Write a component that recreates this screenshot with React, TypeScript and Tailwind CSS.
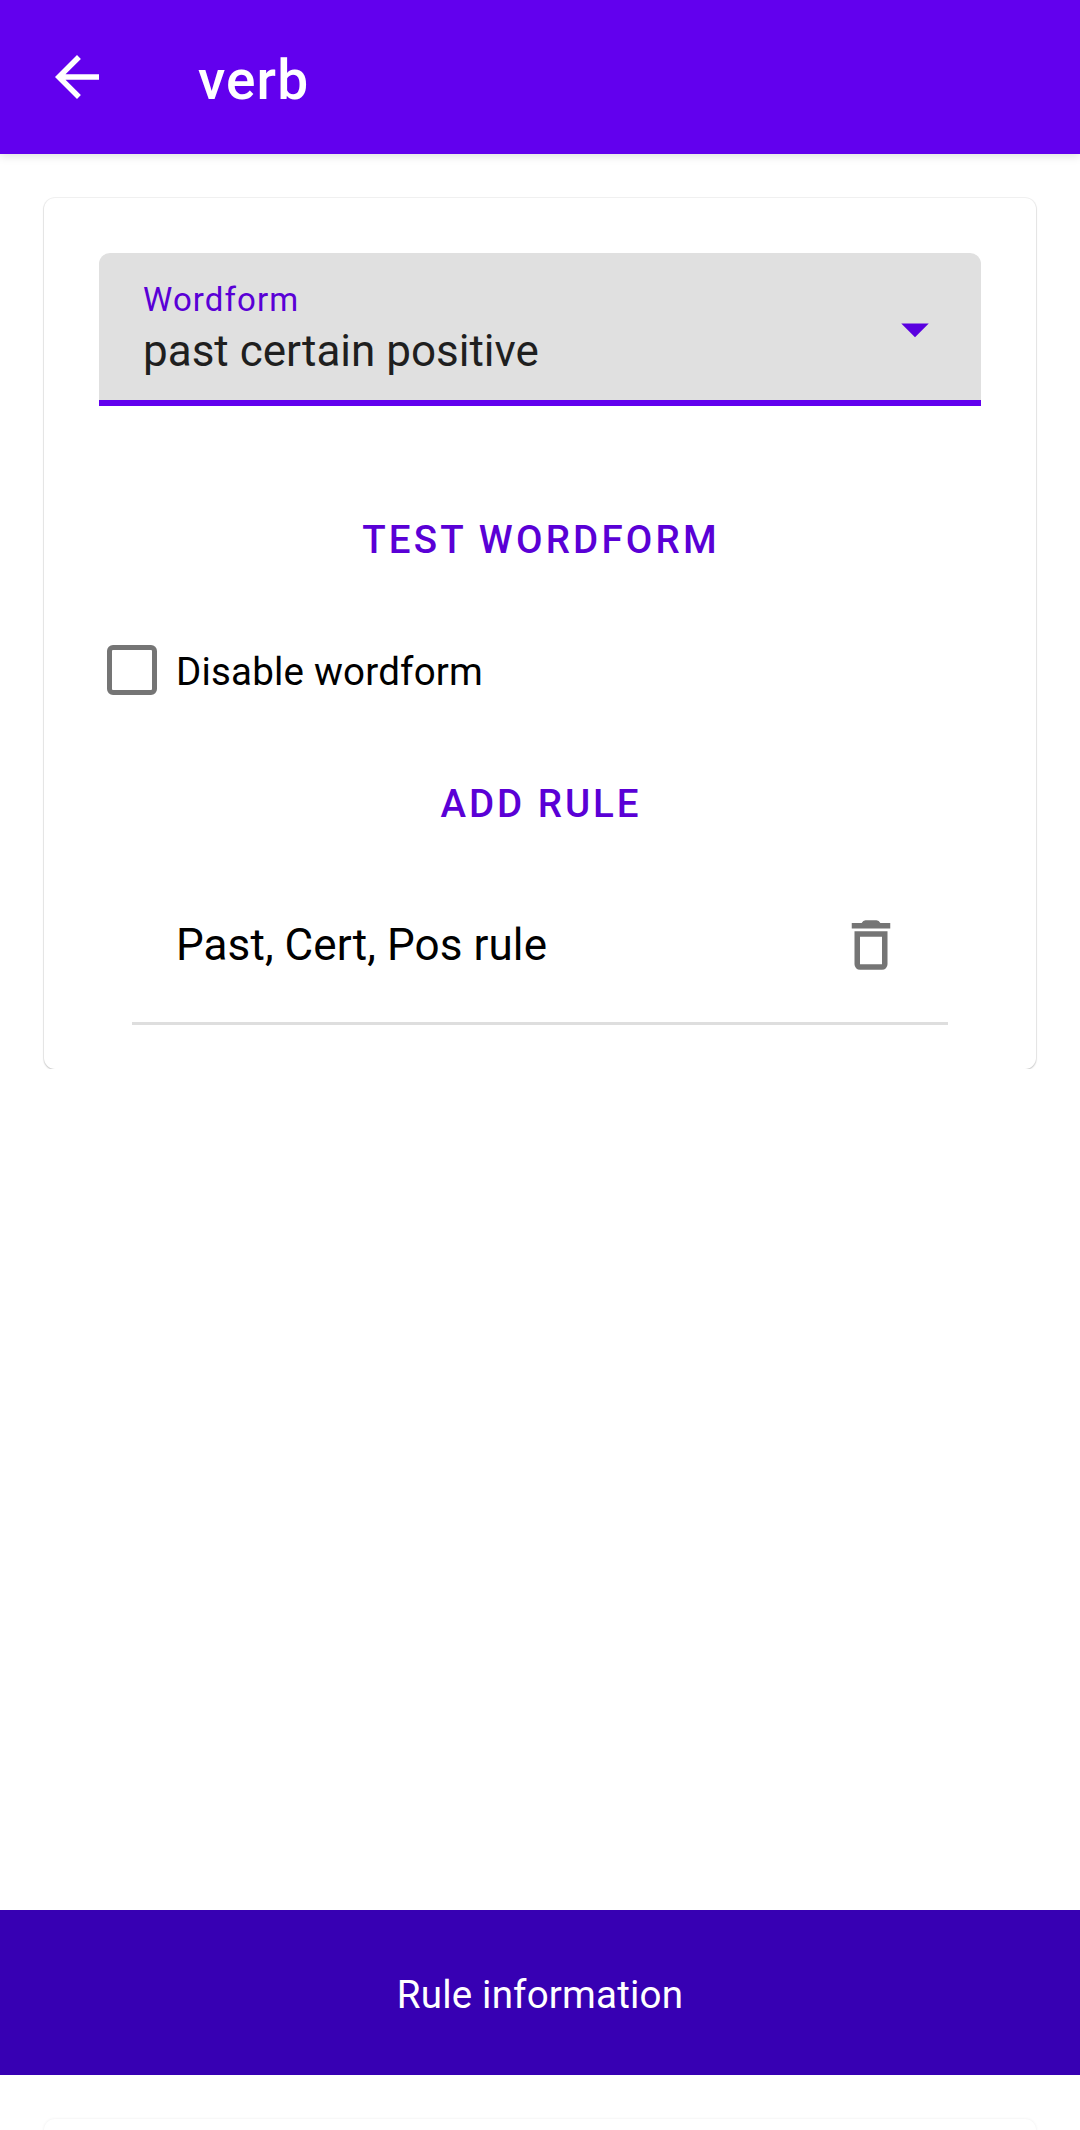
import React from "react";

function BackIcon() {
  return (
    <svg viewBox="0 0 24 24" className="h-[66px] w-[66px] fill-white">
      <path d="M20 11H7.83l5.59-5.59L12 4l-8 8 8 8 1.41-1.41L7.83 13H20v-2z" />
    </svg>
  );
}

function TrashIcon() {
  return (
    <svg viewBox="0 0 24 24" className="mb-[2px] h-[66px] w-[66px] fill-[#757575]">
      <path d="M5 4h3.6q.5-1 1.4-1h4q.9 0 1.400 1H19v2H5z" />
      <path fillRule="evenodd" d="M6 7h12v12a2 2 0 0 1-2 2H8a2 2 0 0 1-2-2zM8 9v10h8V9z" />
    </svg>
  );
}

function TextButton({ tracking, children }: { tracking: string; children: React.ReactNode }) {
  return (
    <button
      className={`flex h-[132px] w-full items-center justify-center pt-[2px] pl-[2px] text-[38.5px] font-medium text-[#5a00d6] ${tracking}`}
    >
      {children}
    </button>
  );
}

export default function App() {
  return (
    <div className="flex h-[2130px] w-[1080px] flex-col overflow-hidden bg-white font-['Roboto',sans-serif] text-black">
      <header className="z-10 flex h-[154px] shrink-0 items-center bg-[#6200ee] px-11 shadow-[0_2px_9px_rgba(0,0,0,0.13)]">
        <BackIcon />
        <h1 className="ml-[88px] pt-[7px] text-[55px] leading-none font-medium tracking-[1.1px] text-white">verb</h1>
      </header>

      <main className="h-[915px] shrink-0 overflow-hidden px-11 pt-11">
        <section className="h-[871px] rounded-[11px] bg-white px-[55px] pt-[55px] shadow-[0_0_0_1px_rgba(0,0,0,0.05),0_1px_2px_rgba(0,0,0,0.2)]">
          <div className="flex h-[153px] items-center justify-between rounded-t-[11px] border-b-[6px] border-[#6200ee] bg-[#e0e0e0] pr-[33px] pl-11">
            <div className="flex flex-col pt-[5px]">
              <span className="text-[33px] leading-[44px] tracking-[0.0333em] text-[#5a00d6]">Wordform</span>
              <span className="text-[44px] leading-[58px] text-[#1f1f1f]">past certain positive</span>
            </div>
            <svg viewBox="0 0 24 24" className="mt-[4px] h-[66px] w-[66px] fill-[#5a00e0]">
              <path d="M7 10l5 5 5-5z" />
            </svg>
          </div>

          <div className="pt-[67px]">
            <TextButton tracking="tracking-[3.2px]">TEST WORDFORM</TextButton>
          </div>

          <label className="flex h-[132px] items-center pl-2">
            <span className="mb-[2px] h-[50px] w-[50px] rounded-[6px] border-[5.5px] border-[#757575]" />
            <span className="ml-[19px] pt-[2px] text-[38.5px] tracking-[0.2px]">Disable wordform</span>
          </label>

          <TextButton tracking="tracking-[2.95px]">ADD RULE</TextButton>

          <div className="mx-[33px] flex h-[156px] items-center justify-between border-b-[3px] border-[#dedede] pr-11 pl-11">
            <span className="pb-[2px] text-[44px] tracking-[0.08px]">Past, Cert, Pos rule</span>
            <TrashIcon />
          </div>
        </section>
      </main>

      <footer className="mt-auto shrink-0">
        <div className="flex h-[165px] items-center justify-center bg-[#3700b3] pt-[5px] text-[38.5px] tracking-[0.2px] text-white">
          Rule information
        </div>
        <div className="h-[55px] overflow-hidden px-11 pt-11">
          <div className="h-[60px] rounded-t-[11px] bg-white shadow-[0_0_3px_rgba(0,0,0,0.08)]" />
        </div>
      </footer>
    </div>
  );
}
